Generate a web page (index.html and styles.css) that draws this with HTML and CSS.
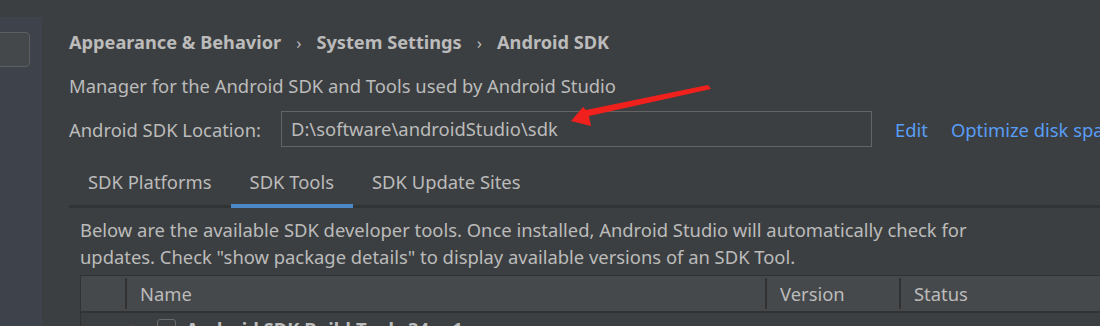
FILE: index.html
```html
<!DOCTYPE html>
<html>

<head>
  <title>Android SDK</title>
  <link rel="stylesheet" href="styles.css">
</head>

<body>
  <div class="window">
    <aside class="sidebar">
      <div class="search"></div>
    </aside>

    <main class="content">
      <div class="crumbs">
        <span>Appearance &amp; Behavior</span>
        <span class="sep">›</span>
        <span>System Settings</span>
        <span class="sep">›</span>
        <span>Android SDK</span>
      </div>

      <p class="desc">Manager for the Android SDK and Tools used by Android Studio</p>

      <div class="location-row">
        <label class="location-label">Android SDK Location:</label>
        <div class="location-input">D:\software\androidStudio\sdk</div>
        <a class="link">Edit</a>
        <a class="link">Optimize disk space</a>
      </div>

      <div class="tabs">
        <div class="tab">SDK Platforms</div>
        <div class="tab active">SDK Tools</div>
        <div class="tab">SDK Update Sites</div>
      </div>

      <div class="panel">
        <p class="hint">Below are the available SDK developer tools. Once installed, Android Studio will automatically check for
          updates. Check "show package details" to display available versions of an SDK Tool.</p>

        <div class="table">
          <div class="table-head">
            <div class="col col-check"></div>
            <div class="col col-name">Name</div>
            <div class="col col-version">Version</div>
            <div class="col col-status">Status</div>
          </div>
          <div class="table-row">
            <div class="col col-check"></div>
            <div class="col col-name">
              <span class="expander">▶</span>
              <span class="checkbox"></span>
              <b>Android SDK Build-Tools 34-rc1</b>
            </div>
          </div>
        </div>
      </div>
    </main>
  </div>

  <!-- red annotation arrow -->
  <svg class="arrow" width="1100" height="326" viewBox="0 0 1100 326">
    <polygon points="708,85 711,89 589,116 591,126 571,121 583,107 586,110" fill="#f0201c" />
  </svg>
</body>

</html>
```

FILE: styles.css
```css
body {
  margin: 0;
  overflow: hidden;
  background-color: #3c3f41;
  color: #bbbbbb;
  font-family: "Noto Sans", "Open Sans", sans-serif;
  font-size: 18.4px;
}

.window {
  display: flex;
  height: 326px;
  width: 1300px;
  overflow: hidden;
}

.sidebar {
  width: 42px;
  margin-top: 17px;
  background-color: #3e424a;
  flex-shrink: 0;
}

.search {
  margin-top: 15px;
  margin-left: -10px;
  width: 38px;
  height: 33px;
  border: 1px solid #5c5f61;
  border-radius: 4px;
  background-color: #45484a;
}

.content {
  flex: 1;
  padding-left: 27px;
  white-space: nowrap;
}

.crumbs {
  display: flex;
  gap: 15px;
  margin-top: 28px;
  height: 28px;
  align-items: center;
  font-weight: bold;
  font-size: 18.2px;
}

.crumbs .sep {
  font-weight: normal;
  font-size: 17px;
}

.desc {
  margin: 17px 0 0 0;
  height: 26px;
  line-height: 26px;
}

.location-row {
  display: flex;
  align-items: center;
  margin-top: 12px;
  height: 36px;
}

.location-label {
  width: 212px;
}

.location-input {
  box-sizing: border-box;
  width: 591px;
  height: 36px;
  line-height: 34px;
  padding-left: 9px;
  border: 1px solid #646464;
  background-color: #3c3f41;
}

.link {
  color: #589df6;
  margin-left: 23px;
}

.tabs {
  display: flex;
  margin-top: 16px;
  height: 42px;
  border-bottom: 3px solid #313335;
}

.tab {
  padding: 0 19px;
  line-height: 38px;
  margin-bottom: -3px;
  border-bottom: 4px solid transparent;
}

.tab.active {
  border-bottom-color: #4a88c7;
}

.panel {
  padding-left: 11px;
}

.hint {
  margin: 8px 0 0 0;
  white-space: normal;
  width: 920px;
  line-height: 27px;
}

.table {
  margin-top: 5px;
  border-top: 1px solid #323232;
  border-left: 1px solid #323232;
}

.table-head {
  display: flex;
  height: 35px;
  align-items: center;
  background-color: #46494b;
  border-bottom: 2px solid #323232;
}

.table-row {
  display: flex;
  height: 30px;
  align-items: center;
}

.col {
  box-sizing: border-box;
  padding-left: 13px;
}

.table-head .col + .col {
  border-left: 2px solid #323232;
  line-height: 31px;
}

.table-row .col-name {
  padding-left: 6px;
  display: flex;
  align-items: center;
}

.col-check {
  width: 44px;
}

.col-name {
  width: 640px;
}

.col-version {
  width: 134px;
}

.col-status {
  flex: 1;
}

.expander {
  font-size: 10px;
  color: #9a9a9a;
}

.checkbox {
  display: inline-block;
  width: 17px;
  height: 17px;
  margin: 0 10px 0 18px;
  border: 1px solid #6b6b6b;
  border-radius: 3px;
}
.arrow {
  position: absolute;
  top: 0;
  left: 0;
  pointer-events: none;
}
```
